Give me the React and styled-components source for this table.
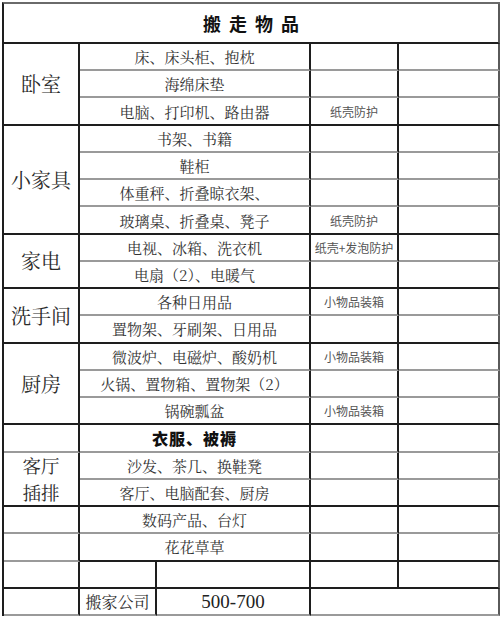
import React from "react";
import styled, { createGlobalStyle } from "styled-components";

const Global = createGlobalStyle`
  html, body { margin: 0; padding: 0; background: #fff; }
  body { width: 500px; height: 618px; overflow: hidden; }
`;

const DARK = "#1e1e1e";
const LIGHT = "#9a9a9a";
const SERIF_CJK = `"Noto Serif CJK SC", "Noto Sans CJK SC", "Liberation Serif", serif`;
const SANS_CJK = `"Noto Sans CJK SC", "Noto Sans", sans-serif`;

const Sheet = styled.div`
  box-sizing: border-box;
  margin: 2px 0 0 2px;
  width: 498px;
  height: 614px;
  display: grid;
  grid-template-columns: 76px 77px 154px 88px 101px;
  grid-template-rows: 40px repeat(21, 1fr);
  border-top: 2px solid #6a6a6a;
  border-left: 2px solid ${DARK};
  background: #fff;
`;

const Cell = styled.div`
  box-sizing: border-box;
  grid-column: ${(p) => p.$col} / span ${(p) => p.$span || 1};
  grid-row: ${(p) => p.$row} / span ${(p) => p.$rows || 1};
  border-right: 2px solid ${(p) => (p.$lastCol ? "#5a5a5a" : DARK)};
  border-bottom: 2px solid ${(p) => (p.$light ? LIGHT : DARK)};
  display: flex;
  align-items: center;
  justify-content: center;
  overflow: hidden;
  white-space: nowrap;
  min-width: 0;
  min-height: 0;
`;

const Title = styled(Cell)`
  font-family: ${SANS_CJK};
  font-weight: 700;
  font-size: 18px;
  letter-spacing: 8px;
  padding-left: 8px;
  color: #111;
`;

const Category = styled(Cell)`
  flex-direction: column;
  overflow: visible;
  font-family: ${SERIF_CJK};
  font-size: 20px;
  color: #2a2a2a;
`;

const CatLine = styled.div`
  height: 27px;
  line-height: 27px;
  font-size: ${(p) => (p.$stacked ? "18.5px" : "20px")};
`;

const Item = styled(Cell)`
  font-family: ${(p) => (p.$strong ? SANS_CJK : SERIF_CJK)};
  font-size: ${(p) => (p.$strong ? "16px" : "15px")};
  color: ${(p) => (p.$strong ? "#111" : "#333")};
  font-weight: ${(p) => (p.$strong ? 900 : 400)};
  letter-spacing: ${(p) => (p.$strong ? "1px" : "0")};
`;

const Note = styled(Cell)`
  font-family: ${SANS_CJK};
  font-size: 12px;
  color: #555;
`;

const Company = styled(Cell)`
  font-family: ${SERIF_CJK};
  font-size: 16px;
  color: #2a2a2a;
`;

const Price = styled(Cell)`
  font-family: "Liberation Serif", serif;
  font-size: 19px;
  color: #222;
  padding-top: 2px;
`;

const groups = [
  { label: ["卧室"], start: 1, len: 3 },
  { label: ["小家具"], start: 4, len: 4 },
  { label: ["家电"], start: 8, len: 2 },
  { label: ["洗手间"], start: 10, len: 2 },
  { label: ["厨房"], start: 12, len: 3 },
  { label: [], start: 15, len: 1, light: true },
  { label: ["客厅", "插排"], start: 16, len: 2 },
  { label: [], start: 18, len: 1, light: true },
  { label: [], start: 19, len: 1, light: true },
  { label: [], start: 20, len: 1 },
  { label: [], start: 21, len: 1, light: true },
];

const rows = [
  { text: "床、床头柜、抱枕", light: true },
  { text: "海绵床垫", light: true },
  { text: "电脑、打印机、路由器", note: "纸壳防护" },
  { text: "书架、书籍", light: true },
  { text: "鞋柜", light: true },
  { text: "体重秤、折叠晾衣架、", light: true },
  { text: "玻璃桌、折叠桌、凳子", note: "纸壳防护" },
  { text: "电视、冰箱、洗衣机", note: "纸壳+发泡防护", light: true },
  { text: "电扇（2）、电暖气" },
  { text: "各种日用品", note: "小物品装箱", light: true },
  { text: "置物架、牙刷架、日用品" },
  { text: "微波炉、电磁炉、酸奶机", note: "小物品装箱", light: true },
  { text: "火锅、置物箱、置物架（2）", light: true },
  { text: "锅碗瓢盆", note: "小物品装箱" },
  { text: "衣服、被褥", strong: true, light: true },
  { text: "沙发、茶几、换鞋凳", light: true },
  { text: "客厅、电脑配套、厨房" },
  { text: "数码产品、台灯", light: true },
  { text: "花花草草", light: false },
];

export default function App() {
  return (
    <>
      <Global />
      <Sheet>
        <Title $col={1} $span={5} $row={1} $lastCol>
          搬走物品
        </Title>

        {groups.map((g) => (
          <Category key={g.start} $col={1} $row={g.start + 1} $rows={g.len} $light={g.light}>
            {g.label.map((l) => (
              <CatLine key={l} $stacked={g.label.length > 1}>
                {l}
              </CatLine>
            ))}
          </Category>
        ))}

        {rows.map((r, i) => (
          <React.Fragment key={i}>
            <Item $col={2} $span={2} $row={i + 2} $light={r.light} $strong={r.strong}>
              {r.text}
            </Item>
            <Note $col={4} $row={i + 2} $light={r.light}>
              {r.note || ""}
            </Note>
            <Cell $col={5} $row={i + 2} $light={r.light} $lastCol />
          </React.Fragment>
        ))}

        <Cell $col={2} $row={21} />
        <Cell $col={3} $row={21} />
        <Cell $col={4} $row={21} />
        <Cell $col={5} $row={21} $lastCol />

        <Company $col={2} $row={22} $light>
          搬家公司
        </Company>
        <Price $col={3} $row={22} $light>
          500-700
        </Price>
        <Cell $col={4} $span={2} $row={22} $light $lastCol />
      </Sheet>
    </>
  );
}
